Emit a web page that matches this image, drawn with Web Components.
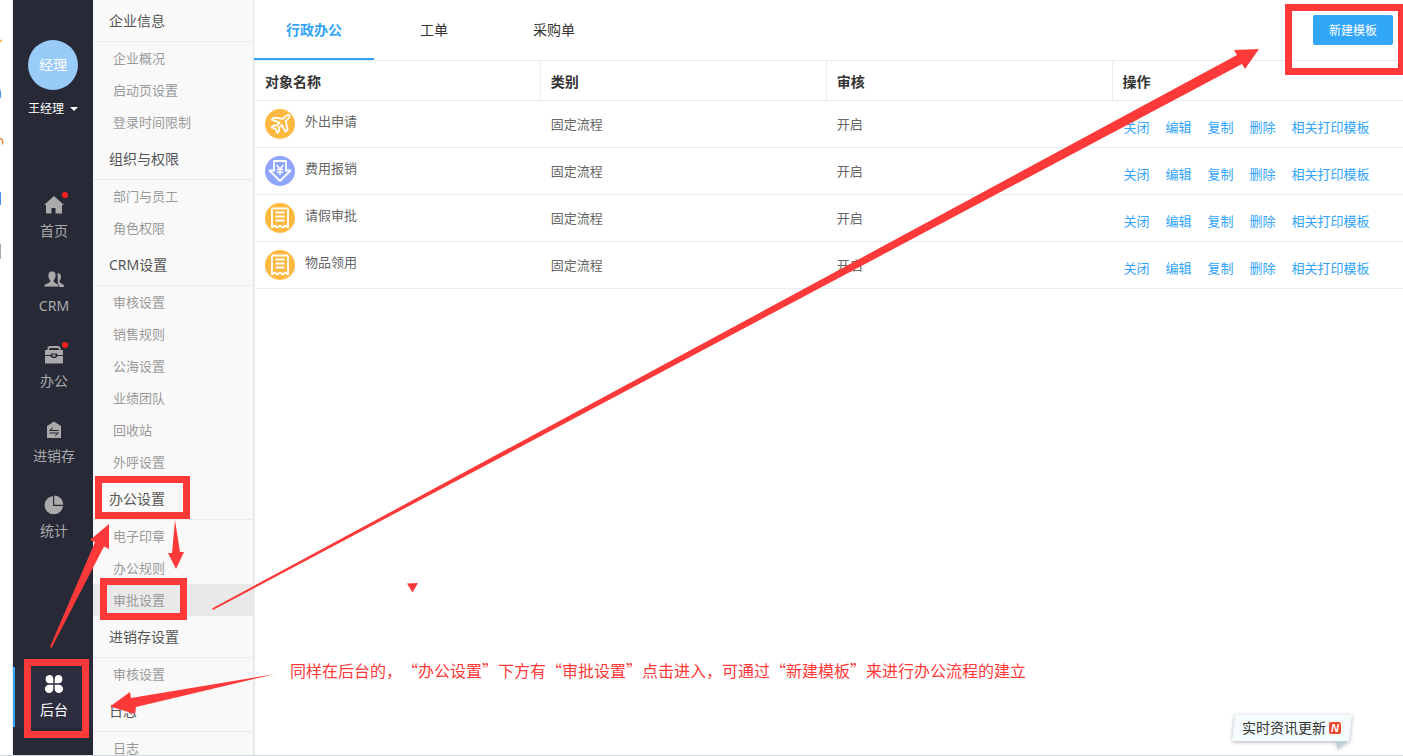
<!DOCTYPE html>
<html lang="zh-CN">
<head>
<meta charset="utf-8">
<meta name="viewport" content="width=device-width, initial-scale=1">
<title>审批设置</title>
<style>
    body{
        margin: 0;
        font-family: "Noto Sans", "Noto Sans CJK SC", sans-serif;
        font-size: 14px;
        color: #333;
        background: #fff;
        overflow: hidden;
    }
</style>
</head>
<body>
<admin-page></admin-page>

<script>
const icons = {
    home: `<path d="M10 1 0 10h2v8.500h5.500V13h4v5.500H18V10h2Z"/>`,
    crm: `<path d="M13.500 3c2.200 0 3.500 1.500 3.500 4 0 1.800-.8 3.200-1.600 4v1.200l3.600 2.300c.8.500 1 1.200 1 2.500h-6Z"/><path d="M8 1c2.500 0 4 1.700 4 4.500 0 2-.9 3.800-2 4.800v1.500l3.800 2.400c.9.600 1.200 1.300 1.200 2.800H0c0-1.500.2-2.200 1-2.700l4.800-2.500v-1.500C4.700 9.300 4 7.500 4 5.500 4 2.700 5.500 1 8 1Z" stroke="#272937" stroke-width=".8"/>`,
    office: `<path fill-rule="evenodd" d="M5 1h10l1.500 1.500V5H19v5h-5.500c0-.8-.5-1.500-1.200-1.500H7.700c-.7 0-1.200.7-1.200 1.500H1V5h2.500V2.500ZM6 3l-1 1v1h10V4l-1-1Z"/><path d="M1 11h5.500c.8 2.800 6.200 2.800 7 0H19v7.500H1Z"/><path d="M8.500 9.500h3v1.500c-.5 1-2.500 1-3 0Z"/>`,
    stock: `<path d="M10 1.500 17 6v12H3V6Z"/><path d="M14.500 10.500h-9L9 7.800M5.500 13h9L11 15.700" fill="none" stroke="#272937"/>`,
    stats: `<path d="M9 1v10h10A9.200 9.200 0 1 1 9 1Z"/><path d="M10.200 0.500A9.200 9.200 0 0 1 19.300 9.800h-9.100Z"/>`,
    admin: `<path d="M5.200 1A4.200 4.200 0 0 1 9.300 5.200v4.100H5.200A4.200 4.200 0 0 1 5.200 1ZM14.800 1a4.200 4.200 0 0 1 0 8.300h-4.100V5.200A4.200 4.200 0 0 1 14.800 1ZM5.200 10.700h4.100v4.100a4.200 4.200 0 1 1-4.100-4.100ZM10.700 10.700h4.100a4.200 4.200 0 1 1-4.100 4.100Z"/>`,
    plane: `<path d="M22.500 6c1.500-.9 2.700.4 2 1.900-.6 1.200-1.900 2.500-3.700 4.200l1.800 8.600-2 2-3.800-6.700-3 2.700.3 3-1.700 2.300-1.800-4-4-1.700 2-1.900 3.200.2 2.600-2.900-7.600-3.100 2-2 9 1.300c1.700-2 3.400-3.200 4.700-3.900Z"/>`,
    money: `<path d="M9 5h12v9.500h4.500L15 25 4.500 14.500H9Z"/><path d="m11.500 9 3.500 4 3.500-4M15 13v6M11.800 13.500h6.400M11.800 16.300h6.400" stroke-width="1.400"/>`,
    form: `<path d="M8 5.500h14q1 0 1 1V24.500l-2.700-2-2.600 2-2.700-2-2.700 2-2.600-2-2.700 2V6.500q0-1 1-1Z"/><path d="M10.500 9.500h9M10.500 13.500h9M10.500 17.500h9"/>`
};

// left rail entry: icon above its label, with an optional dot
class RailItem extends HTMLElement{
    constructor(){
        super();
        this.attachShadow({mode: "open"});
    }
    connectedCallback(){
        this.shadowRoot.innerHTML = `
        <style>
            :host{
                display: block;
            }
            a{
                box-sizing: border-box;
                display: flex;
                flex-direction: column;
                align-items: center;
                gap: 6px;
                height: 60px;
                padding-top: 7px;
                border-left: 2px solid transparent;
                color: #aaa;
                line-height: 20px;
                text-decoration: none;
            }
            :host([active]) a{
                color: #fff;
                background: #2c2e3f;
                border-color: #32a5fa;
            }
            .icon{
                position: relative;
                height: 20px;
            }
            .dot{
                position: absolute;
                top: -3px;
                right: -4px;
                width: 6px;
                height: 6px;
                border-radius: 50%;
                background: #ff1d1d;
            }
            svg{
                display: block;
                fill: currentColor;
            }
        </style>
        <a href="#">
            <span class="icon">
                <svg width="20" height="20" viewBox="0 0 20 20" aria-hidden="true">${icons[this.getAttribute("icon")]}</svg>
                ${this.hasAttribute("dot") ? `<span class="dot"></span>` : ""}
            </span>
            <slot></slot>
        </a>
        `;
    }
}

class NavRail extends HTMLElement{
    constructor(){
        super();
        this.attachShadow({mode: "open"});
        this.shadowRoot.innerHTML = `
        <style>
            :host{
                box-sizing: border-box;
                display: flex;
                flex-direction: column;
                flex: none;
                width: 80px;
                padding: 40px 0 28px;
                background: #272937;
            }
            .avatar{
                align-self: center;
                width: 50px;
                height: 50px;
                border-radius: 50%;
                background: #99cbf9;
                color: #fff;
                line-height: 50px;
                text-align: center;
            }
            .user{
                display: flex;
                align-items: center;
                align-self: center;
                gap: 6px;
                margin-top: 9px;
                padding: 0;
                border: 0;
                background: none;
                color: #fff;
                font: inherit;
                font-size: 12px;
                line-height: 20px;
            }
            .caret{
                border: 4px solid transparent;
                border-top-color: #fff;
                border-bottom: 0;
            }
            nav{
                display: flex;
                flex-direction: column;
                flex: 1;
                gap: 15px;
                margin-top: 69px;
            }
            .last{
                margin-top: auto;
            }
        </style>
        <div class="avatar">经理</div>
        <button class="user">王经理<span class="caret"></span></button>
        <nav>
            <rail-item icon="home" dot>首页</rail-item>
            <rail-item icon="crm">CRM</rail-item>
            <rail-item icon="office" dot>办公</rail-item>
            <rail-item icon="stock">进销存</rail-item>
            <rail-item icon="stats">统计</rail-item>
            <rail-item class="last" icon="admin" active>后台</rail-item>
        </nav>
        `;
    }
}

const menu = [
    {title: "企业信息", items: ["企业概况", "启动页设置", "登录时间限制"]},
    {title: "组织与权限", items: ["部门与员工", "角色权限"]},
    {title: "CRM设置", items: ["审核设置", "销售规则", "公海设置", "业绩团队", "回收站", "外呼设置"]},
    {title: "办公设置", items: ["电子印章", "办公规则", "审批设置"]},
    {title: "进销存设置", items: ["审核设置"]},
    {title: "日志", items: ["日志"]}
];

class SettingsMenu extends HTMLElement{
    constructor(){
        super();
        this.attachShadow({mode: "open"});
        this.shadowRoot.innerHTML = `
        <style>
            :host{
                display: block;
                flex: none;
                width: 160px;
                overflow: hidden;
                border-right: 1px solid #e6e6ec;
                background: #f9f9f9;
            }
            h3{
                margin: 0;
                padding-left: 16px;
                border-bottom: 1px solid #ebebeb;
                color: #555;
                font-size: 14px;
                font-weight: 400;
                line-height: 41px;
            }
            ul{
                margin: 0;
                padding: 0;
                list-style: none;
            }
            a{
                display: block;
                padding-left: 20px;
                color: #999;
                font-size: 13px;
                line-height: 32px;
                text-decoration: none;
            }
            .current{
                background: #e9e9e9;
            }
        </style>
        ${menu.map(group => `
            <h3>${group.title}</h3>
            <ul>
                ${group.items.map(item => `<li><a href="#"${item === "审批设置" ? ` class="current"` : ""}>${item}</a></li>`).join("")}
            </ul>
        `).join("")}
        `;
    }
}

class TabBar extends HTMLElement{
    constructor(){
        super();
        this.attachShadow({mode: "open"});
        this.shadowRoot.innerHTML = `
        <style>
            :host{
                display: flex;
                align-items: center;
                justify-content: space-between;
                height: 60px;
                padding-right: 10px;
            }
            .tabs{
                display: flex;
            }
            .tabs button{
                width: 120px;
                height: 60px;
                padding: 0;
                border: 0;
                border-bottom: 2px solid transparent;
                background: none;
                color: #333;
                font: inherit;
            }
            .tabs .active{
                border-color: #32a5fa;
                color: #32a5fa;
                font-weight: 700;
            }
            .create{
                width: 80px;
                height: 30px;
                padding: 0;
                border: 0;
                border-radius: 2px;
                background: #32a7fa;
                color: #fff;
                font: inherit;
                font-size: 12px;
            }
        </style>
        <div class="tabs" role="tablist">
            <button role="tab" class="active" aria-selected="true">行政办公</button>
            <button role="tab">工单</button>
            <button role="tab">采购单</button>
        </div>
        <button class="create">新建模板</button>
        `;
    }
}

const templates = [
    {name: "外出申请", icon: "plane", color: "#ffb840"},
    {name: "费用报销", icon: "money", color: "#8fa5fb"},
    {name: "请假审批", icon: "form", color: "#ffb840"},
    {name: "物品领用", icon: "form", color: "#ffb840"}
];
const actions = ["关闭", "编辑", "复制", "删除", "相关打印模板"];

class TemplateTable extends HTMLElement{
    constructor(){
        super();
        this.attachShadow({mode: "open"});
        this.shadowRoot.innerHTML = `
        <style>
            :host{
                display: block;
                flex: 1;
                border-top: 1px solid #e9ecf5;
                border-left: 1px solid #e9ecf5;
            }
            table{
                width: 100%;
                border-collapse: separate;
                border-spacing: 0;
                table-layout: fixed;
            }
            th, td{
                box-sizing: border-box;
                padding: 0 10px;
                border-bottom: 1px solid #e9ecf5;
                text-align: left;
            }
            th{
                width: 24.9%;
                height: 40px;
                border-right: 1px solid #e9ecf5;
                font-weight: 700;
            }
            th:last-child{
                width: auto;
                border-right: 0;
            }
            td{
                height: 47px;
                color: #666;
                font-size: 13px;
                line-height: 20px;
            }
            .name{
                display: flex;
                gap: 10px;
            }
            .name svg{
                border-radius: 50%;
                fill: none;
                stroke: #fff;
                stroke-width: 1.8;
                stroke-linejoin: round;
            }
            .name span{
                padding-top: 2px;
            }
            .actions{
                display: flex;
                gap: 16px;
                padding-top: 6px;
                padding-left: 1px;
                white-space: nowrap;
            }
            .actions a{
                color: #32a5fa;
                text-decoration: none;
            }
        </style>
        <table>
            <thead>
                <tr><th>对象名称</th><th>类别</th><th>审核</th><th>操作</th></tr>
            </thead>
            <tbody>
                ${templates.map(row => `
                <tr>
                    <td>
                        <div class="name">
                            <svg width="30" height="30" viewBox="0 0 30 30" style="background: ${row.color}" aria-hidden="true">${icons[row.icon]}</svg>
                            <span>${row.name}</span>
                        </div>
                    </td>
                    <td>固定流程</td>
                    <td>开启</td>
                    <td><div class="actions">${actions.map(text => `<a href="#">${text}</a>`).join("")}</div></td>
                </tr>`).join("")}
            </tbody>
        </table>
        `;
    }
}

class NewsTip extends HTMLElement{
    constructor(){
        super();
        this.attachShadow({mode: "open"});
        this.shadowRoot.innerHTML = `
        <style>
            :host{
                position: absolute;
                right: 50px;
                bottom: 3px;
                width: 122px;
                height: 38px;
            }
            svg{
                position: absolute;
                inset: 0;
                filter: drop-shadow(0 1px 2px rgba(0, 0, 0, .3));
            }
            a{
                position: relative;
                display: flex;
                align-items: center;
                gap: 3px;
                padding: 4px 0 0 11px;
                color: #333;
                line-height: 20px;
                text-decoration: none;
                white-space: nowrap;
            }
            b{
                flex: none;
                width: 12px;
                height: 12px;
                border-radius: 2px;
                background: #e8482c;
                color: #fff;
                font: italic 700 11px/12px "Liberation Sans", sans-serif;
                text-align: center;
            }
        </style>
        <svg width="122" height="38" viewBox="0 0 122 38" aria-hidden="true">
            <path d="M106 26h12l-12 9Z" fill="#bcd5d8"/>
            <path d="M4 1h117l-3 26H1Z" fill="#f5fcfe"/>
        </svg>
        <a href="#">实时资讯更新<b>N</b></a>
        `;
    }
}

// red frames, arrows and note drawn above the page
class GuideLayer extends HTMLElement{
    constructor(){
        super();
        this.attachShadow({mode: "open"});
        this.shadowRoot.innerHTML = `
        <style>
            :host{
                position: absolute;
                inset: 0;
                overflow: hidden;
                pointer-events: none;
            }
            svg{
                display: block;
                fill: #fd3a39;
            }
            rect{
                fill: none;
                stroke: #fd3a39;
                stroke-width: 7;
            }
            p{
                position: absolute;
                top: 658px;
                left: 290px;
                margin: 0;
                color: #fd3a39;
                font-family: "Noto Sans CJK SC", sans-serif;
                font-size: 16px;
                line-height: 24px;
                white-space: nowrap;
                text-spacing-trim: space-all;
            }
        </style>
        <svg width="1410" height="756" viewBox="0 0 1410 756" aria-hidden="true">
            <rect x="1288.5" y="7.5" width="113" height="64"/>
            <rect x="98.5" y="479.5" width="88" height="36"/>
            <rect x="103.5" y="581.5" width="80" height="35"/>
            <rect x="27.5" y="662.5" width="58" height="72"/>
            <path d="M50 647 95 542l-5-2 19-16v25l-5-2.500L51.500 648Z"/>
            <path d="m175 520 5 32h4l-8 17-8-16h4Z"/>
            <path d="m275 674-144 24-1-6-20 14.500 25 7.500 1-7Z"/>
            <path d="M212 608.500 1237 55l-3-5 25-1-14 20-3-5L213 610Z"/>
            <path d="m407 583.500 11-.5-5.500 9.500Z"/>
        </svg>
        <p>同样在后台的，“办公设置”下方有“审批设置”点击进入，可通过“新建模板”来进行办公流程的建立</p>
        `;
    }
}

class AdminPage extends HTMLElement{
    constructor(){
        super();
        this.attachShadow({mode: "open"});
        this.shadowRoot.innerHTML = `
        <style>
            :host{
                position: relative;
                box-sizing: border-box;
                display: flex;
                height: 100vh;
                border-bottom: 1px solid #d3d6de;
                overflow: hidden;
            }
            .edge{
                flex: none;
                width: 12px;
                border-right: 1px solid #e6e6ec;
            }
            main{
                display: flex;
                flex: 1;
                flex-direction: column;
                min-width: 0;
            }
        </style>
        <div class="edge">
            <svg width="12" height="270" viewBox="0 0 12 270" aria-hidden="true">
                <path d="M0 40.500 2 39v2l-2 2Z" fill="#f5b93a"/>
                <path d="M0 89c1.500 2 1.500 8 0 10Z" fill="#4a8cf5"/>
                <path d="M0 138.500c2.500 0 3 2 2.500 6" fill="none" stroke="#e58a3c" stroke-width="1.500"/>
                <path d="M0 192h1v13H0Z" fill="#4a8cf5"/>
                <path d="M0 244h1v15H0Z" fill="#aaa"/>
            </svg>
        </div>
        <nav-rail></nav-rail>
        <settings-menu></settings-menu>
        <main>
            <tab-bar></tab-bar>
            <template-table></template-table>
        </main>
        <news-tip></news-tip>
        <guide-layer></guide-layer>
        `;
    }
}

customElements.define("rail-item", RailItem);
customElements.define("nav-rail", NavRail);
customElements.define("settings-menu", SettingsMenu);
customElements.define("tab-bar", TabBar);
customElements.define("template-table", TemplateTable);
customElements.define("news-tip", NewsTip);
customElements.define("guide-layer", GuideLayer);
customElements.define("admin-page", AdminPage);
</script>
</body>
</html>
